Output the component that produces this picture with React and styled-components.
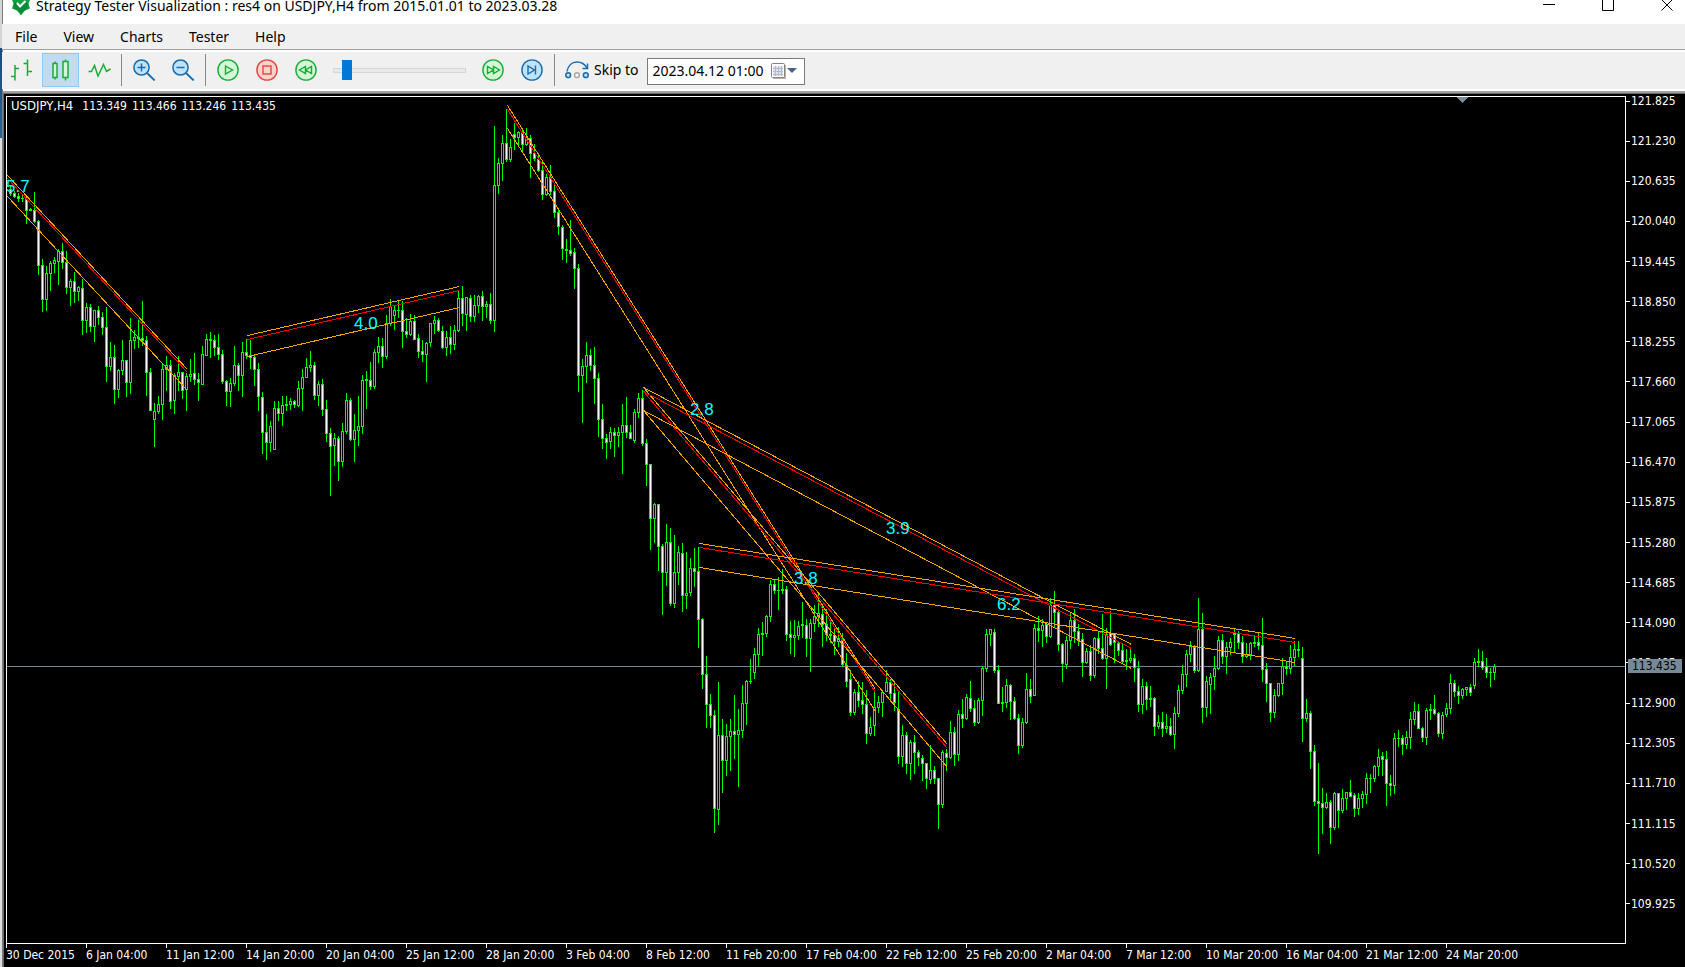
import React, { useState } from "react";
import styled, { createGlobalStyle } from "styled-components";

const colors = {
  face: "#f0f0f0",
  shadow: "#a0a0a0",
  darkShadow: "#696969",
  lime: "#00ff00",
  orange: "#ffa500",
  red: "#ff0000",
  aqua: "#00ffff",
  slate: "#778899",
  green: "#1aab34",
  paleGreen: "#d3f8d8",
  blue: "#1a6cab",
  paleBlue: "#bfe3fc",
  stop: "#e0443e",
  paleStop: "#ffd2cc"
};

const uiFont = `"Noto Sans", "Open Sans", sans-serif`;
const chartFont = `"DejaVu Sans Condensed", "Noto Sans", sans-serif`;

const GlobalStyle = createGlobalStyle`
  body {
    margin: 0;
    overflow: hidden;
  }

  * {
    box-sizing: border-box;
  }
`;

// strip of the desktop that shows at the left of the window
const Desktop = styled.div`
  height: 100vh;
  padding-left: 2px;
  background: linear-gradient(
    #d4d4d4 48px,
    #1d4c78 48px,
    #2b628f 138px,
    #dcdcdc 138px
  );
`;

const Window = styled.main`
  height: 100%;
  display: flex;
  flex-direction: column;
  border-left: 1px solid #7b7b7b;
  background: #fff;
  color: #000;
  font: 14px/20px ${uiFont};
`;

const TitleBar = styled.header`
  height: 24px;
  flex: none;
  display: flex;
  align-items: flex-start;
  padding: 0 12px 0 9px;
`;

const Title = styled.h1`
  flex: 1;
  margin: 0 0 0 6px;
  font-size: 14px;
  font-weight: 400;
  line-height: 12px;
  white-space: nowrap;
`;

const Caption = styled.div`
  display: flex;
  gap: 47px;
`;

const CaptionButton = styled.button`
  width: 12px;
  height: 12px;
  padding: 0;
  border: 0;
  background: none;

  svg {
    display: block;
  }
`;

const MenuBar = styled.nav`
  height: 26px;
  flex: none;
  display: flex;
  margin-left: -1px;
  background: ${colors.face};
  border-bottom: 1px solid ${colors.shadow};
`;

const MenuItem = styled.button`
  padding: 0 13px;
  border: 0;
  background: none;
  font: inherit;
  color: inherit;
`;

const Toolbar = styled.div`
  height: 37px;
  flex: none;
  display: flex;
  align-items: center;
  margin: 2px 0 2px -1px;
  padding: 1px 0 2px;
  background: ${colors.face};
`;

const Tool = styled.button`
  width: 37px;
  height: 34px;
  margin: 0 1px;
  padding: 0;
  display: flex;
  align-items: center;
  justify-content: center;
  border: 1px solid ${props => (props.$active ? "#90c8f6" : "transparent")};
  background: ${props => (props.$active ? "#c0dcf3" : "none")};
`;

const Separator = styled.span`
  width: 1px;
  height: 32px;
  margin: 0 3px 0 2px;
  background: #8a8a8a;
`;

const Speed = styled.input`
  appearance: none;
  width: 133px;
  height: 20px;
  margin: 0 8px 0 7px;
  background: none;

  &::-webkit-slider-runnable-track {
    height: 5px;
    background: #e7eaea;
    border: 1px solid #d6d6d6;
  }

  &::-webkit-slider-thumb {
    appearance: none;
    width: 10px;
    height: 20px;
    margin-top: -9px;
    background: #0078d7;
  }
`;

const SkipLabel = styled.label`
  display: flex;
  align-items: center;
  gap: 5px;
  margin: 0 8px 0 7px;
`;

const DateBox = styled.div`
  width: 158px;
  height: 27px;
  display: flex;
  align-items: center;
  margin-top: 2px;
  padding-right: 7px;
  border: 1px solid #7a7a7a;
  background: #fff;
`;

const DateInput = styled.input`
  flex: 1;
  min-width: 0;
  padding: 0 0 0 5px;
  border: 0;
  outline: 0;
  font: inherit;
  color: inherit;
`;

const DateButton = styled.button`
  padding: 0;
  border: 0;
  background: none;

  svg {
    display: block;
  }
`;

const ChartFrame = styled.section`
  flex: 1;
  min-height: 0;
  display: grid;
  grid-template: minmax(0, 1fr) 23px / minmax(0, 1fr) 59px;
  padding: 2px 0 0 2px;
  border: solid ${colors.darkShadow};
  border-width: 1px 0 0 1px;
  box-shadow: 0 -2px ${colors.shadow};
  margin-top: 2px;
  background: #000;
  color: #fff;
  font: 12px/16px ${chartFont};
`;

const Plot = styled.div`
  position: relative;
  border: 1px solid #fff;
  overflow: hidden;

  svg {
    display: block;
    width: 100%;
    height: 100%;
  }
`;

const Quote = styled.p`
  position: absolute;
  top: 1px;
  left: 4px;
  margin: 0;
  display: flex;
  align-items: baseline;
  gap: 5px;
`;

const QuoteSymbol = styled.span`
  margin-right: 4px;
  font-size: 13px;
`;

const PriceAxis = styled.div`
  position: relative;
  margin: -3px 0 32px;
  display: flex;
  flex-direction: column;
  justify-content: space-between;
`;

const Price = styled.span`
  height: 16px;
  display: flex;
  align-items: center;

  &::before {
    content: "";
    width: 4px;
    height: 1px;
    margin-right: 1px;
    background: #fff;
  }
`;

const LastPrice = styled.span`
  position: absolute;
  left: 2px;
  height: 14px;
  width: 54px;
  line-height: 14px;
  padding-left: 4px;
  background: ${colors.slate};
  color: #000;
`;

const TimeAxis = styled.div`
  grid-column: 1 / -1;
  display: flex;
  overflow: hidden;
`;

const Time = styled.span`
  position: relative;
  flex: none;
  width: 80px;
  padding-top: 3px;
  white-space: nowrap;

  &::before {
    content: "";
    position: absolute;
    top: 0;
    left: 0;
    width: 1px;
    height: 4px;
    background: #fff;
  }
`;

const Glyph = ({ width = 23, height = 22, children, ...rest }) => (
  <svg
    width={width}
    height={height}
    viewBox={`0 0 ${width} ${height}`}
    fill="none"
    aria-hidden="true"
    {...rest}
  >
    {children}
  </svg>
);

const Round = ({ stroke, fill, children }) => (
  <Glyph stroke={stroke} strokeWidth="1.4">
    <circle cx="11" cy="11" r="10.1" fill={fill} />
    {children}
  </Glyph>
);

const Lens = ({ plus }) => (
  <Glyph stroke={colors.blue} strokeWidth="1.5">
    <circle cx="8.5" cy="8.5" r="7.6" fill={colors.paleBlue} />
    <path d="M14 14 L21.7 21.5" strokeWidth="1.8" />
    <path d={plus ? "M4.5 8.5 H12.5 M8.5 4.5 V12.5" : "M4.5 8.5 H12.5"} />
  </Glyph>
);

const BarsIcon = () => (
  <Glyph stroke={colors.green} strokeWidth="1.5">
    <path d="M5 6 V21.5 M5 9.5 H9 M1 17.5 H5 M17.5 0.5 V17 M13.5 4.5 H17.5 M17.5 12.5 H22" />
  </Glyph>
);

const CandlesIcon = () => (
  <Glyph stroke={colors.green} strokeWidth="1.5">
    <path d="M6 2.5 V20.5 M16.5 0.5 V21.5" />
    <rect x="4" y="4.5" width="4" height="14" fill={colors.paleGreen} />
    <rect x="14" y="2.5" width="5" height="16" fill={colors.paleGreen} />
  </Glyph>
);

const LineIcon = () => (
  <Glyph stroke={colors.green} strokeWidth="1.5">
    <path d="M0.5 12.5 H3.5 L6.5 6.5 L10 17 L15.5 5.5 L18.5 12.5 L22.5 10" />
  </Glyph>
);

const SkipIcon = () => (
  <Glyph width={24} height={18} stroke={colors.blue} strokeWidth="1.5">
    <path d="M2 10.5 C3 4.5 7 1 12 1 C16.5 1 20 3.5 22 7" />
    <path d="M22.5 2.5 V7.5 H17.5" />
    <circle cx="3.2" cy="14.2" r="2.4" fill={colors.paleBlue} />
    <circle cx="12" cy="14.2" r="2.4" stroke="#a8a8a8" fill="#fff" />
    <circle cx="20.8" cy="14.2" r="2.4" fill={colors.paleBlue} />
  </Glyph>
);

const CalendarIcon = () => (
  <Glyph width={26} height={16}>
    <rect x="2" y="2" width="13" height="14" fill="#b9b4ae" />
    <rect x="0.5" y="0.5" width="13" height="14" rx="1" fill="#fff" stroke="#8a807a" />
    <rect x="2" y="3" width="10" height="10" fill="#dfe5f2" />
    <path
      d="M2 5.5 H12 M2 8.5 H12 M2 11.5 H12 M4.5 3 V13 M7.5 3 V13 M10.5 3 V13"
      stroke="#b4bac8"
    />
    <path d="M16 5 H26 L21 10 Z" fill="#4a5f8c" />
  </Glyph>
);

const AppIcon = () => (
  <Glyph width={18} height={16}>
    <path
      d="M0 0 H18 L16.5 3.5 L18 8.5 L13 10.5 L9 15.5 L5 10.5 L0 8.5 L1.5 3.5 Z"
      fill="#12a044"
    />
    <path d="M2 2 L9 6 L16 2 V8 L9 13 L2 8 Z" fill="#0b8a38" />
    <path d="M5 3 L8 6.5 L13.5 1" stroke="#fff" strokeWidth="2" />
  </Glyph>
);

// one candle per bar: u(p) or d(own), then high, body top, body bottom, low
const bars = `
d185,189,194,196 d191,193,197,198 d193,196,199,202 d194,198,199,202 d196,199,211,224
u208,209,211,211 d192,210,222,223 d220,221,266,275 d259,265,300,312 u266,273,300,311
u261,263,274,291 u257,260,264,273 u249,251,262,285 d243,251,263,269 d251,262,288,294
u279,281,288,306 d272,281,292,303 u286,287,292,301 d279,288,321,335 u303,307,321,333
d304,307,327,332 u310,310,327,342 d306,310,318,325 d312,317,328,335 d307,327,367,382
u342,357,367,371 d345,357,390,404 u369,370,390,398 u340,360,371,375 d360,360,383,397
u318,340,383,394 u330,337,341,349 d320,337,339,348 d301,338,341,346 d336,340,373,396
d368,372,411,411 u403,411,420,447 u396,404,412,414 u364,369,405,420 u356,365,370,391
d360,365,402,409 u373,375,401,414 u356,372,377,391 d372,372,391,399 u373,376,390,411
u359,374,377,382 d353,373,380,385 d373,379,383,401 u346,354,385,385 u334,339,356,356
u332,339,341,358 d335,340,348,356 d334,347,355,360 d350,354,382,384 d380,381,392,406
u378,383,392,407 u346,365,384,386 d363,365,376,391 u342,352,376,397 d339,352,356,359
d340,355,358,369 d355,357,370,386 d363,369,397,411 d392,397,433,454 d414,432,443,460
u421,426,443,452 u401,408,450,450 d401,408,414,421 u396,405,414,426 d396,404,406,411
u398,401,405,410 d400,401,405,408 u381,388,406,407 u369,377,389,411 u358,367,378,378
u351,365,368,372 d362,365,396,400 u381,384,396,406 d379,384,410,416 d400,409,434,442
d428,433,447,496 u433,438,446,466 d436,438,462,481 u423,431,462,467 u393,400,432,434
d398,400,440,441 u414,430,440,462 u396,426,431,446 u375,380,427,434 d371,379,381,409
d362,380,387,390 u349,352,387,389 u337,346,353,363 d338,346,357,368 u315,323,357,359
u299,306,324,326 u305,310,316,330 d300,310,311,318 d301,310,332,348 d318,331,335,338
u314,321,335,336 d315,321,340,340 d334,338,352,358 d340,351,355,362 u342,343,355,382
u323,323,343,347 u316,320,324,334 d318,320,331,332 d326,331,348,349 u331,337,348,356
d326,337,345,354 u325,330,345,350 u291,298,331,332 d286,298,314,326 u297,297,315,331
d295,298,317,322 u295,305,317,322 u295,296,306,313 d291,296,307,321 u301,304,307,318
d293,304,321,324 u126,185,321,332 u158,163,186,194 u135,143,164,181 d109,143,160,162
u139,147,160,162 d123,134,138,150 u131,132,138,145 d130,132,145,152 u128,137,145,146
d135,138,154,178 d144,153,159,161 d153,159,171,172 d161,170,195,200 u174,177,195,196
d165,177,192,195 d185,191,213,218 d209,212,227,235 d225,227,249,260 d239,249,251,263
d220,250,254,256 d248,252,269,289 d264,268,376,392 u359,366,376,423 u342,355,367,383
d349,355,366,371 d347,365,379,404 d373,378,420,437 d404,419,439,449 d434,438,443,459
u427,432,442,449 d428,432,436,457 u427,432,436,447 u404,425,433,474 d397,425,433,438
d425,432,439,439 u409,412,441,443 u393,398,413,418 d390,398,444,446 d439,443,465,486
d464,464,519,550 u503,504,519,543 d504,504,547,571 d544,546,573,615 u524,542,573,586
d528,542,604,606 u535,572,604,608 u546,552,573,585 d543,553,596,612 u552,593,596,609
u558,568,593,596 d548,568,572,587 d547,571,620,648 d618,619,675,689 d656,674,705,728
d694,704,716,728 d710,715,809,833 u682,735,810,825 d719,735,761,793 u724,736,761,776
u719,731,737,771 d695,731,735,759 u709,730,735,787 u685,703,731,738 u680,681,704,725
d659,681,682,684 u648,654,673,679 u628,634,655,666 d622,633,635,656 u615,616,634,637
u580,584,617,622 d580,584,591,594 d577,590,591,610 d569,589,591,594 d586,589,635,641
d621,634,638,654 u620,635,638,657 u621,626,636,640 d602,624,626,638 d619,625,639,657
u619,623,639,672 u605,616,624,632 u593,613,617,627 d605,614,625,647 d609,624,635,641
d622,634,636,643 d629,635,642,655 u627,638,642,647 d633,638,665,667 d653,665,682,687
d670,679,713,716 u689,692,713,715 d681,692,701,707 d682,700,705,714 d690,704,734,744
u717,727,734,736 u692,707,726,736 u696,702,708,713 u690,692,703,717 u670,682,692,692
d679,682,694,702 d683,693,703,711 d692,709,757,764 u725,735,757,767 d732,735,764,774
u740,742,764,780 d735,742,753,774 d750,752,758,766 d755,758,764,781 d763,763,779,789
u745,770,780,784 d766,770,779,784 d778,778,805,829 u750,752,805,808 d749,753,758,771
u721,732,758,759 d727,732,755,766 u710,714,755,761 d699,714,719,728 u694,697,719,720
d681,698,709,712 d700,708,723,726 u698,700,723,724 u666,668,701,716 u629,634,669,672
u629,629,635,646 d629,632,671,673 d665,670,704,704 d687,702,704,712 u679,685,703,708
d684,685,702,720 d697,701,719,720 d714,718,746,754 u718,722,746,748 u673,689,723,724
d679,689,697,703 u624,628,696,696 d616,628,631,642 u619,625,631,647 d622,624,637,643
u598,605,637,638 d591,605,613,628 d611,612,645,651 d643,644,664,682 u636,640,665,669
u612,620,641,649 d609,620,632,643 d624,631,640,646 d633,639,663,677 u648,651,663,664
d645,651,676,681 u637,638,676,678 d631,638,649,654 d614,648,659,660 u628,634,659,689
d611,633,645,646 d633,633,643,663 d641,643,651,656 d644,650,662,664 d649,660,662,670
u648,658,661,663 d654,658,668,682 d661,668,705,712 u679,686,705,714 d682,686,700,710
d686,698,700,707 d697,698,727,736 u715,722,727,729 d712,722,729,737 u714,726,729,733
d718,726,735,736 u707,713,735,749 u685,690,714,717 u665,674,691,694 u650,654,675,687
u641,646,655,662 d645,647,671,673 u598,629,671,672 d613,629,708,723 u676,681,708,717
u673,677,685,714 u656,668,677,690 u636,640,669,670 d634,640,657,664 u642,647,657,674
u638,642,648,655 d629,633,635,652 d631,633,643,649 d636,642,657,663 u643,654,657,658
u642,643,655,660 d636,642,644,647 d633,642,646,650 d618,645,670,682 d663,669,684,702
d683,683,713,722 u689,695,713,718 u683,683,696,697 u658,666,684,695 d662,666,669,675
u645,657,669,674 u641,649,658,666 d641,649,651,657 d647,658,719,742 u699,713,719,722
d711,713,752,769 d745,751,802,806 d763,801,804,854 d788,803,808,834 u793,802,808,809
d800,802,828,844 u792,793,828,830 d793,793,811,828 u789,798,811,813 u792,792,799,810
d780,792,797,797 d793,795,809,817 u793,798,809,815 u791,794,799,808 u773,778,795,804
d774,778,779,793 u765,766,779,782 u749,757,767,776 d752,756,760,776 d751,759,784,806
d775,783,786,796 u733,738,786,794 d730,738,739,747 d735,738,745,755 u731,737,745,749
u712,719,738,749 u702,711,720,725 d704,711,729,729 d727,728,738,742 u708,710,738,745
d704,709,711,720 d695,709,714,715 d712,713,734,737 u712,715,734,739 u703,708,715,717
u674,683,709,714 d680,683,692,697 d686,691,696,704 u688,689,696,699 u687,687,690,696
d684,687,693,696 u658,662,686,689 d649,661,663,667 d651,661,668,670 d658,666,673,678
d668,672,673,687 u664,666,673,680`
  .trim()
  .split(/\s+/)
  .map(bar => [bar[0] === "u", ...bar.slice(1).split(",").map(Number)]);

// x1, x2, then start and end of the upper, middle and lower line
const channels = [
  [7, 187, [175, 369], [178, 372], [196, 390]],
  [247, 459, [335, 286], [339, 290], [356, 307]],
  [507, 875, [105, 689], [109, 692], [128, 711]],
  [643, 947, [387, 744], [391, 748], [410, 767]],
  [643, 1131, [387, 644], [391, 648], [410, 668]],
  [699, 1295, [543, 638], [547, 642], [567, 662]]
];

const marks = [
  [6, 192, "5.7"],
  [354, 329, "4.0"],
  [690, 415, "2.8"],
  [794, 584, "3.8"],
  [886, 534, "3.9"],
  [997, 610, "6.2"]
];

const top = 121.825;
const step = 0.595;
const last = 113.435;
const prices = Array.from({ length: 21 }, (_, i) => top - i * step);

const times = [
  "30 Dec 2015",
  "6 Jan 04:00",
  "11 Jan 12:00",
  "14 Jan 20:00",
  "20 Jan 04:00",
  "25 Jan 12:00",
  "28 Jan 20:00",
  "3 Feb 04:00",
  "8 Feb 12:00",
  "11 Feb 20:00",
  "17 Feb 04:00",
  "22 Feb 12:00",
  "25 Feb 20:00",
  "2 Mar 04:00",
  "7 Mar 12:00",
  "10 Mar 20:00",
  "16 Mar 04:00",
  "21 Mar 12:00",
  "24 Mar 20:00"
];

const Candle = ({ x, bar: [up, high, bodyTop, bodyBottom, low] }) => {
  const height = Math.max(1, bodyBottom - bodyTop);

  return (
    <g fill={colors.lime}>
      <rect x={x} y={high} width="1" height={low - high} />
      <rect x={x - 1} y={bodyTop} width="3" height={height} />
      {height > 2 && (
        <rect
          x={x}
          y={bodyTop + 1}
          width="1"
          height={height - 2}
          fill={up ? "#000" : "#fff"}
        />
      )}
    </g>
  );
};

const Chart = () => (
  <svg
    viewBox="7 97 1618 846"
    preserveAspectRatio="xMinYMin meet"
    shapeRendering="crispEdges"
    role="img"
    aria-label="USDJPY,H4"
  >
    <rect x="7" y="666" width="1618" height="1" fill={colors.slate} />
    {bars.map((bar, i) => (
      <Candle key={i} x={10 + i * 4} bar={bar} />
    ))}
    {channels.map(([x1, x2, ...lines], i) =>
      lines.map(([y1, y2], j) => (
        <line
          key={`${i}-${j}`}
          x1={x1 + 0.5}
          x2={x2 + 0.5}
          y1={y1 + 0.5}
          y2={y2 + 0.5}
          stroke={j === 1 ? colors.red : colors.orange}
        />
      ))
    )}
    <path d="M1456 97 H1468 L1462 103 Z" fill={colors.slate} />
    <g fill={colors.aqua} fontFamily="'Liberation Sans', sans-serif" fontSize="17">
      {marks.map(([x, y, text]) => (
        <text key={text} x={x} y={y}>
          {text}
        </text>
      ))}
    </g>
  </svg>
);

const App = () => {
  const [view, setView] = useState("candles");
  const [speed, setSpeed] = useState(4);
  const [date, setDate] = useState("2023.04.12 01:00");

  const views = [
    ["bars", <BarsIcon />],
    ["candles", <CandlesIcon />],
    ["line", <LineIcon />]
  ];

  return (
    <Desktop>
      <GlobalStyle />
      <Window>
        <TitleBar>
          <AppIcon />
          <Title>
            Strategy Tester Visualization : res4 on USDJPY,H4 from 2015.01.01 to
            2023.03.28
          </Title>
          <Caption>
            <CaptionButton aria-label="Minimize">
              <Glyph width={12} height={12} stroke="#000">
                <path d="M0 4.5 H12" />
              </Glyph>
            </CaptionButton>
            <CaptionButton aria-label="Maximize">
              <Glyph width={12} height={12} stroke="#000">
                <path d="M0.5 0 V10.5 H11.5 V0" />
              </Glyph>
            </CaptionButton>
            <CaptionButton aria-label="Close">
              <Glyph width={12} height={12} stroke="#000">
                <path d="M0.5 -0.5 L11.5 10.5 M11.5 -0.5 L0.5 10.5" />
              </Glyph>
            </CaptionButton>
          </Caption>
        </TitleBar>
        <MenuBar>
          {["File", "View", "Charts", "Tester", "Help"].map(item => (
            <MenuItem key={item}>{item}</MenuItem>
          ))}
        </MenuBar>
        <Toolbar>
          {views.map(([name, icon]) => (
            <Tool
              key={name}
              aria-label={name}
              aria-pressed={view === name}
              $active={view === name}
              onClick={() => setView(name)}
            >
              {icon}
            </Tool>
          ))}
          <Separator />
          <Tool aria-label="Zoom in">
            <Lens plus />
          </Tool>
          <Tool aria-label="Zoom out">
            <Lens />
          </Tool>
          <Separator />
          <Tool aria-label="Play">
            <Round stroke={colors.green} fill={colors.paleGreen}>
              <path d="M8.5 7 L15.5 11 L8.5 15 Z" />
            </Round>
          </Tool>
          <Tool aria-label="Stop">
            <Round stroke={colors.stop} fill={colors.paleStop}>
              <rect x="7" y="7" width="8" height="8" />
            </Round>
          </Tool>
          <Tool aria-label="Slower">
            <Round stroke={colors.green} fill={colors.paleGreen}>
              <path d="M10.5 7.5 V14.5 L4.5 11 Z M16.5 7.5 V14.5 L10.5 11 Z" />
            </Round>
          </Tool>
          <Speed
            type="range"
            aria-label="Speed"
            min="0"
            max="61"
            value={speed}
            onChange={event => setSpeed(event.target.value)}
          />
          <Tool aria-label="Faster">
            <Round stroke={colors.green} fill={colors.paleGreen}>
              <path d="M5.5 7.5 V14.5 L11.5 11 Z M11.5 7.5 V14.5 L17.5 11 Z" />
            </Round>
          </Tool>
          <Tool aria-label="Next">
            <Round stroke={colors.blue} fill={colors.paleBlue}>
              <path d="M7 7 V15 L13.5 11 Z M14.5 6.5 V15.5" />
            </Round>
          </Tool>
          <Separator />
          <SkipLabel htmlFor="skip-to">
            <SkipIcon />
            Skip to
          </SkipLabel>
          <DateBox>
            <DateInput
              id="skip-to"
              value={date}
              onChange={event => setDate(event.target.value)}
            />
            <DateButton aria-label="Pick a date">
              <CalendarIcon />
            </DateButton>
          </DateBox>
        </Toolbar>
        <ChartFrame>
          <Plot>
            <Chart />
            <Quote>
              <QuoteSymbol>USDJPY,H4</QuoteSymbol>
              {["113.349", "113.466", "113.246", "113.435"].map(value => (
                <span key={value}>{value}</span>
              ))}
            </Quote>
          </Plot>
          <PriceAxis>
            {prices.map(price => (
              <Price key={price}>{price.toFixed(3)}</Price>
            ))}
            <LastPrice
              style={{
                top: `calc((100% - 16px) * ${(top - last) / (step * 20)})`
              }}
            >
              {last}
            </LastPrice>
          </PriceAxis>
          <TimeAxis>
            {times.map(time => (
              <Time key={time}>{time}</Time>
            ))}
          </TimeAxis>
        </ChartFrame>
      </Window>
    </Desktop>
  );
};

export default App;
